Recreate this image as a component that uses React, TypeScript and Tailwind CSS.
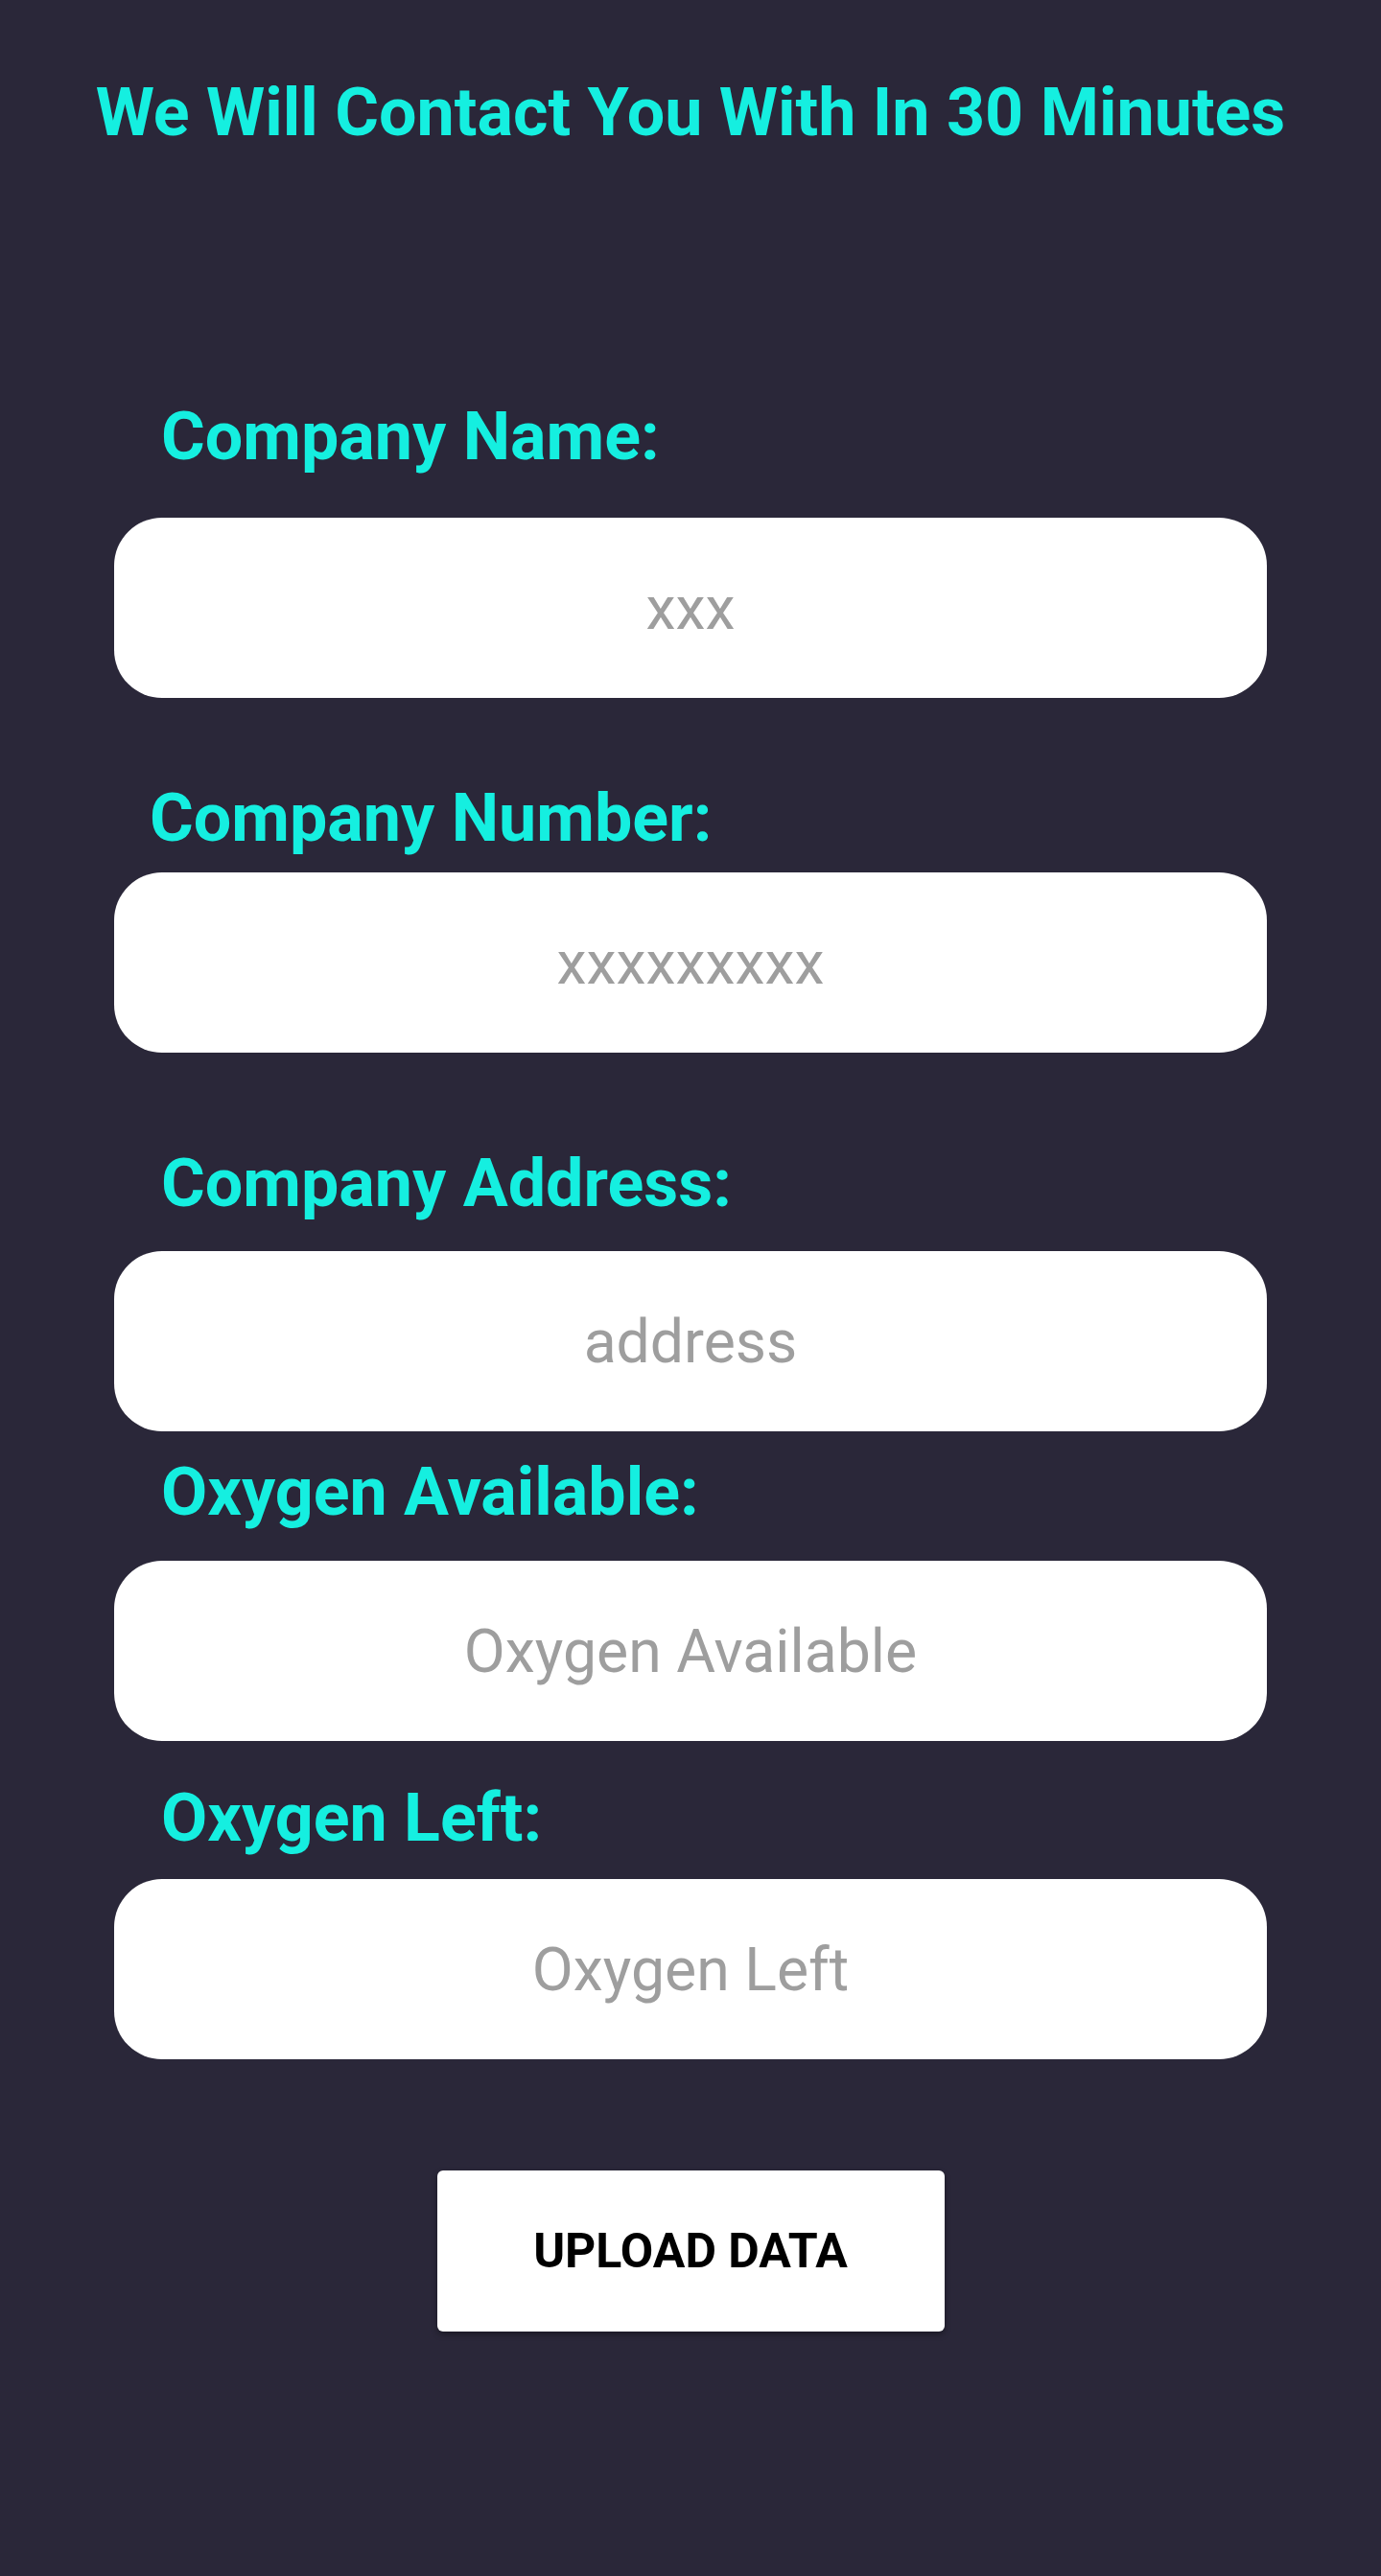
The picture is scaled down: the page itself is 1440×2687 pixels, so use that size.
import React from "react";

function Field({
  label,
  placeholder,
  labelClass,
  inputClass,
}: {
  label: string;
  placeholder: string;
  labelClass: string;
  inputClass: string;
}) {
  return (
    <>
      <label className={`block text-[70px] leading-[70px] font-bold text-[#15efe0] ${labelClass}`}>{label}</label>
      <input
        type="text"
        placeholder={placeholder}
        className={`block w-[1202px] h-[188px] rounded-[50px] bg-white text-center text-[62.5px] text-[#333] placeholder:text-[#9e9e9e] outline-none font-['Roboto',sans-serif] ${inputClass}`}
      />
    </>
  );
}

export default function App() {
  return (
    <div className="min-h-[2687px] bg-[#2a2739] font-['Roboto',sans-serif]">
      <h1 className="pt-[82px] text-center text-[70px] leading-[70px] font-bold text-[#15efe0]">
        We Will Contact You With In 30 Minutes
      </h1>
      <div className="mx-auto w-[1202px]">
        <Field label="Company Name:" placeholder="xxx" labelClass="mt-[268px] pl-[49px]" inputClass="mt-[50px]" />
        <Field label="Company Number:" placeholder="xxxxxxxxx" labelClass="mt-[90px] pl-[37px]" inputClass="mt-[22px]" />
        <Field label="Company Address:" placeholder="address" labelClass="mt-[101px] pl-[49px]" inputClass="mt-[36px]" />
        <Field label="Oxygen Available:" placeholder="Oxygen Available" labelClass="mt-[28px] pl-[49px]" inputClass="mt-[37px]" />
        <Field label="Oxygen Left:" placeholder="Oxygen Left" labelClass="mt-[45px] pl-[49px]" inputClass="mt-[29px]" />
      </div>
      <div className="flex justify-center pt-[116px]">
        <button className="w-[529px] h-[168px] rounded-[6px] bg-white text-[50px] font-bold text-black uppercase shadow-[0_3px_6px_rgba(0,0,0,0.35)]">
          Upload Data
        </button>
      </div>
    </div>
  );
}
